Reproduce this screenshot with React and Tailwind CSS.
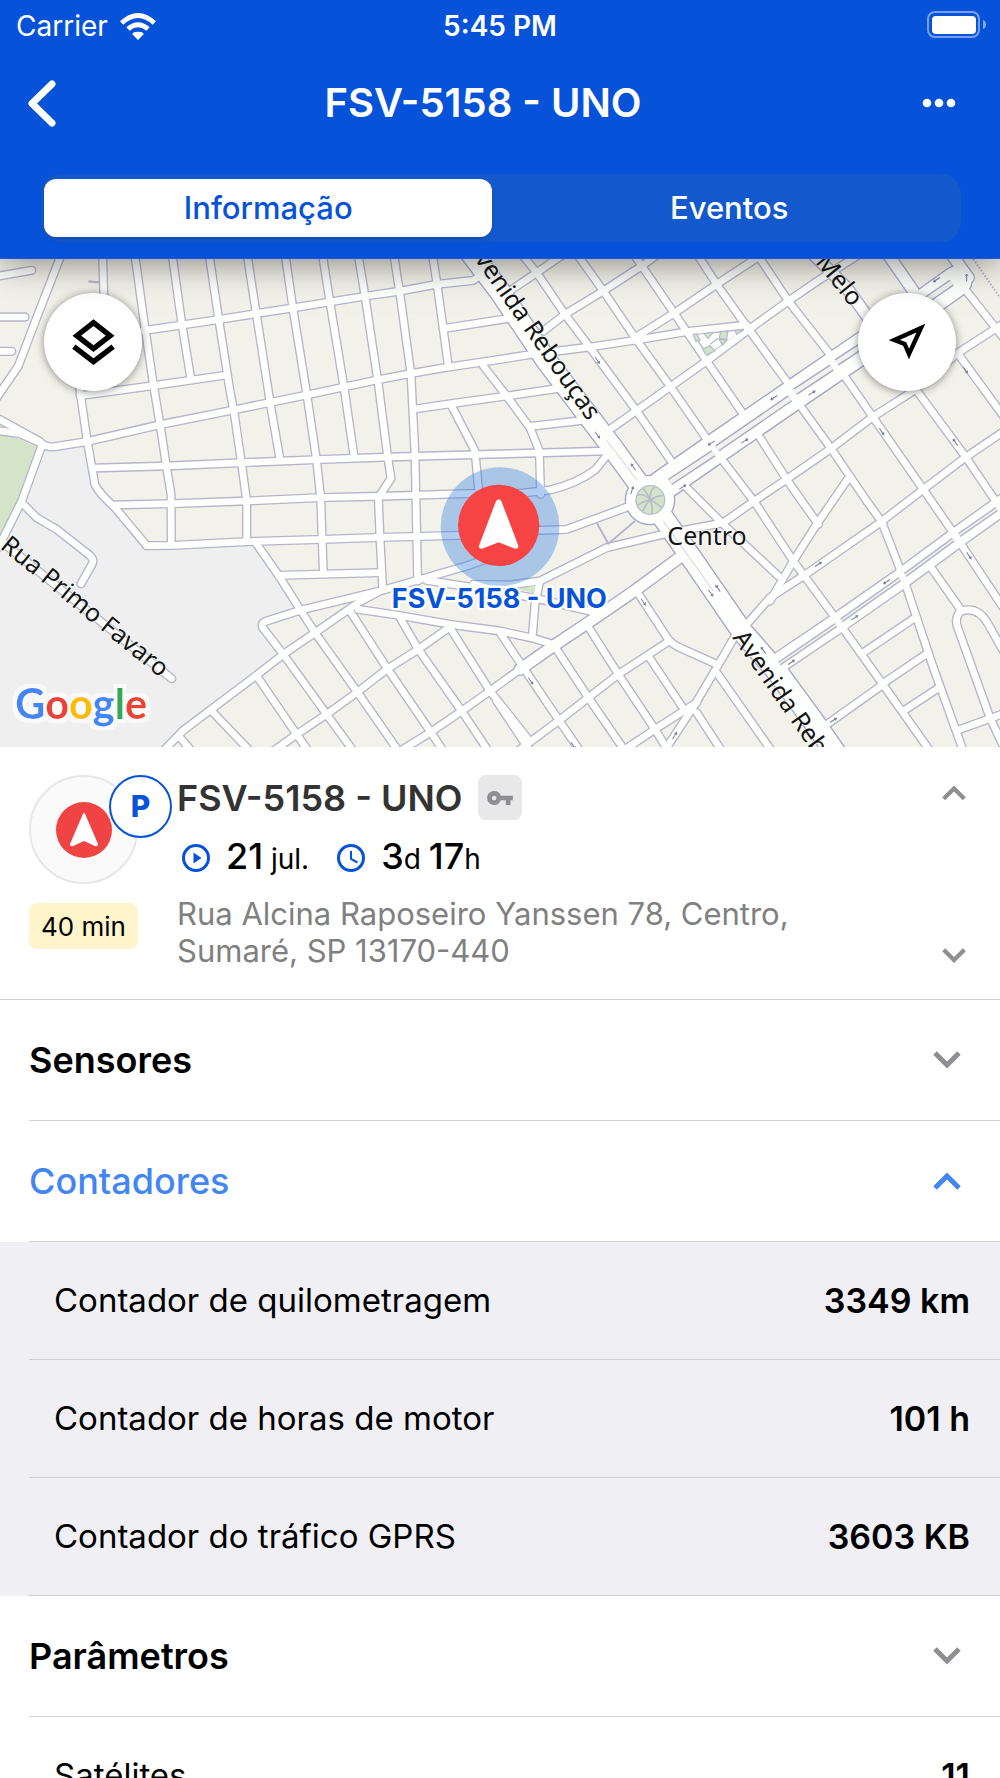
import React, { useState } from "react";
import { MdVpnKey } from "react-icons/md";

/* Town map, drawn on a 3000 x 1464 canvas that starts at y = 774. */
const streets = [
  "M430 989L640 958L870 922L1100 885L1190 872L1310 850L1420 838L1450 818",
  "M1330 983L1540 950",
  "M240 1184L460 1154L680 1122",
  "M-20 1287L60 1298L120 1325",
  "M-20 1245L120 1322Q135 1340 165 1337L260 1322L480 1271L700 1227L920 1182L1130 1137L1230 1118L1340 1099L1500 1075L1610 1058L1770 1038L1910 1017L2060 992L2240 972",
  "M1245 1224L1360 1207L1520 1185L1690 1160",
  "M285 1401L500 1395L730 1385L950 1376L1170 1368L1500 1359L1610 1356L1820 1350",
  "M1590 1276L1760 1257",
  "M340 1512L520 1508L740 1500L960 1490L1170 1485L1400 1478L1560 1477L1650 1467Q1730 1448 1785 1407L1825 1358",
  "M440 1634L520 1633L740 1622L970 1615L1140 1609L1380 1603L1500 1603",
  "M835 1723L1140 1715",
  "M237 1150L262 1322L285 1452Q300 1480 345 1520L440 1634",
  "M405 765L432 960L460 1150L480 1270L500 1400L513 1480L514 1632",
  "M517 765L545 965L572 1130",
  "M628 765L657 960L690 1170L703 1240L725 1390L740 1500L740 1622",
  "M742 765L770 945L812 1215L840 1375",
  "M856 765L880 930L922 1190L950 1380L962 1490L970 1715",
  "M968 765L990 905L1033 1165L1062 1365",
  "M1075 765L1095 885L1135 1150L1163 1368L1173 1432L1135 1490L1140 1610L1148 1760",
  "M1182 765L1200 880L1233 1120L1245 1360L1253 1740",
  "M1298 765L1312 855L1345 1095",
  "M1450 1095L1520 1185L1590 1280L1618 1350L1622 1480",
  "M1355 1215L1425 1350L1437 1480L1440 1600",
  "M182 765L110 950L55 1095L-20 1205",
  "M308 765L312 900",
  "M-20 828L95 808",
  "M-20 948L75 948",
  "M-20 1051L35 1051",
  "M125 1335L65 1500L-5 1640",
  "M65 1505L110 1550L170 1585L268 1662Q284 1676 276 1690L243 1748",
  "M-10 1610L515 2033",
  "M765 1622L835 1722L900 1825L945 1895L1070 2070L1195 2250",
  "M850 1960L980 2140L1060 2250",
  "M1050 1830L1160 2000L1290 2190L1330 2250",
  "M1200 1850L1255 1945L1385 2130L1465 2250",
  "M1350 1880L1470 2070L1585 2215",
  "M770 2025L890 2200L925 2250",
  "M635 2130L750 2250",
  "M540 2210L575 2250",
  "M480 2260L550 2188L760 2030L850 1960L945 1895L1075 1805L1140 1770",
  "M820 2250L890 2200L980 2140L1070 2075L1160 2005L1255 1945L1350 1878",
  "M1200 2250L1290 2195L1385 2130L1470 2070L1560 2005",
  "M850 1960L788 1880Q782 1865 800 1860L900 1828L1140 1770L1400 1695L1500 1660L1560 1590L1700 1585L1890 1515",
  "M1280 1738L1500 1772L1620 1795L1790 1835",
  "M1075 1825L1190 1842L1350 1870L1500 1890L1600 1912L1660 1930",
  "M1618 1745L1605 1810L1597 1905",
  "M1420 1750L1530 1752L1620 1740L1820 1640L1990 1600L2170 1565L2260 1502L2360 1435L2490 1345L2615 1250L2740 1170L2875 1055L3010 968",
  "M1570 765L1610 815L1695 940L1770 1040L1910 1230L2020 1390",
  "M1735 765L1810 870L1905 1010L2010 1155L2135 1335L2265 1505L2380 1680L2520 1870L2645 2045L2790 2250",
  "M1905 765L2025 940L2120 1080L2230 1240",
  "M2095 765L2150 850L2250 990L2370 1155",
  "M2275 765L2365 900L2490 1060",
  "M2875 1060L3010 1245",
  "M2755 1175L2895 1365L3000 1520",
  "M2860 820L3010 1010",
  "M1500 890L1610 815L1690 760",
  "M1630 990L1695 940L1810 870L1925 795L1980 755",
  "M1905 1010L2025 935L2150 850L2290 758",
  "M1830 1285L2010 1158L2120 1080L2240 990L2365 900L2460 835L2570 765",
  "M2240 1870L2310 1790L2410 1725L2640 1565L2770 1465L2895 1370L3010 1292",
  "M2310 1800L2380 1680L2450 1570L2505 1490L2550 1425",
  "M2055 1455L2170 1570L2335 1725",
  "M2280 1310L2360 1435L2405 1500L2455 1570",
  "M2405 1220L2495 1345L2600 1500L2645 1562L2710 1730L2750 1850L2800 2000L2890 2250",
  "M2530 1120L2620 1250L2770 1465L2870 1610L3010 1820",
  "M2790 1695L2885 1830Q2935 1815 2965 1870L3010 1950",
  "M2885 1828Q2860 1850 2875 1885L2970 2150L3010 2235",
  "M2590 1955L2745 1850",
  "M2645 2050L2785 1955",
  "M2710 2130L2820 2058",
  "M2460 2185L2650 2050",
  "M2880 2185L3010 2138",
  "M1910 1770L2000 1908Q2015 1930 2040 1940L2150 1990",
  "M2205 1905L2150 2000L2085 2110L1990 2255",
  "M2150 2015L2315 2250",
  "M2090 2135L2165 2250",
  "M1760 1870L1855 2020L1965 2185L2005 2250",
  "M1945 1965L2045 2115",
  "M1660 1930L1765 2090L1875 2250",
  "M1500 1895L1570 2000L1675 2155L1740 2250",
  "M1490 2100L1590 2250",
  "M1540 2260L1675 2160L1765 2090L1855 2020L2000 1925",
  "M1860 2255L1965 2185L2090 2105",
];
const avenues = [
  "M1560 2005L1660 1935L1760 1868L1900 1772L2045 1665",
  "M2420 740L2540 860L2640 1000",
  "M2650 740L2740 870",
  "M2840 740L2905 830L2860 850",
];
const boulevard = "M1985 1455L2140 1347L2380 1182L2500 1100L2640 1005L2870 840";
const boulevard2 = "M2330 1990L2510 1868L2705 1732L2870 1610L3010 1510";
const reboucas = "M1400 740L1500 872L1640 1080L1830 1330L1950 1495L2060 1650L2225 1890L2330 2010L2440 2160L2510 2260";
const medians = [
  "M2010 1443L2140 1357", "M2152 1342L2370 1192", "M2386 1172L2495 1100",
  "M2510 1084L2600 1025", "M2775 900L2855 845",
];
const medians2 = ["M2338 1988L2508 1872", "M2524 1858L2700 1734", "M2716 1722L2860 1616", "M2878 1602L2990 1524"];
const flow = [
  [1792, 1078, 55], [1792, 1302, 55], [1900, 1398, 235], [1896, 1468, 290], [2048, 1458, -33], [2234, 1320, -33],
  [2436, 1176, -33], [2322, 1190, 147], [2134, 1326, 147], [2896, 1107, 55], [2645, 1292, 55], [2866, 1324, 235],
  [2810, 836, 147], [2900, 830, 270], [2132, 1776, 55], [2154, 1762, 235], [1930, 1803, 55], [2455, 1690, -33],
  [2564, 1850, -33], [2660, 1742, 147], [2374, 1984, -33], [2290, 1948, 235], [2907, 1664, 55], [1592, 2040, 55],
  [2500, 2158, -33], [2024, 2204, -58], [1720, 2234, 55],
];

/* Road layers: paths, casing width, surface width, casing colour. */
const roadLayers = [
  [streets, 28, 20, "#b5b5cb"],
  [avenues, 40, 32, "#a9aacb"],
  [[boulevard], 96, 88, "#a3a5c9"],
  [[boulevard2], 66, 58, "#b5b5cb"],
  [[reboucas], 68, 60, "#a3a5c9"],
];

function TownMap() {
  return (
    <svg viewBox="0 774 3000 1464" className="block h-auto w-full" role="img" aria-label="Mapa">
      <defs>
        <filter id="halo" x="-10%" y="-20%" width="120%" height="140%">
          <feMorphology in="SourceAlpha" operator="dilate" radius="12" result="grown" />
          <feFlood floodColor="#f9f9f9" />
          <feComposite in2="grown" operator="in" result="edge" />
          <feMerge>
            <feMergeNode in="edge" />
            <feMergeNode in="SourceGraphic" />
          </feMerge>
        </filter>
      </defs>
      <rect y="774" width="3000" height="1464" fill="#f3f2ea" />
      <path d="M-10 1310L125 1340L262 1322L285 1452L345 1520L440 1634L765 1622L900 1825L785 1870L850 1960L550 2188L480 2260H-10Z" fill="#eeefee" />
      <path d="M-10 1305L25 1300L115 1340L60 1490L-10 1625Z" fill="#d3e4c9" />
      <path d="M265 841L297 844" stroke="#b5b5cb" strokeWidth="7" />
      {roadLayers.map(([paths, casing, , edge]) => (
        <g key={paths[0]} stroke={edge} strokeWidth={casing} fill="none" strokeLinecap="round" strokeLinejoin="round">
          {paths.map((d) => <path key={d} d={d} />)}
        </g>
      ))}
      <circle cx="1950" cy="1497" r="76" fill="#a3a5c9" />
      {roadLayers.map(([paths, , surface]) => (
        <g key={paths[0]} stroke="#fdfffc" strokeWidth={surface} fill="none" strokeLinecap="round" strokeLinejoin="round">
          {paths.map((d) => <path key={d} d={d} />)}
        </g>
      ))}
      <circle cx="1950" cy="1497" r="72" fill="#fdfffc" />
      <g fill="none">
        {medians.map((d) => <path key={d} d={d} stroke="#a3a5c9" strokeWidth="22" />)}
        {medians.map((d) => <path key={d} d={d} stroke="#f3f2ea" strokeWidth="14" />)}
        {medians2.map((d) => <path key={d} d={d} stroke="#b5b5cb" strokeWidth="14" />)}
        {medians2.map((d) => <path key={d} d={d} stroke="#f3f2ea" strokeWidth="5" />)}
        <path d="M1820 1318L1910 1436M1990 1560L2140 1770" stroke="#b5b5cb" strokeWidth="2" />
        <path d="M2920 774L3000 890" stroke="#b5b5cb" strokeWidth="6" strokeDasharray="5 5" />
        <path d="M1790 1565L1825 1628L1905 1560" stroke="#b5b5cb" strokeWidth="6" />
      </g>
      <circle cx="1951" cy="1497" r="43" fill="#d3e4c9" stroke="#b9bccb" strokeWidth="4" />
      <g stroke="#b9bccb" strokeWidth="5" fill="none">
        <path d="M1951 1497Q1948 1470 1965 1457M1951 1497Q1975 1482 1990 1484M1951 1497Q1975 1510 1985 1520M1951 1497Q1960 1520 1955 1538M1951 1497Q1932 1515 1928 1532M1951 1497Q1925 1502 1912 1514M1951 1497Q1935 1478 1912 1482M1951 1497Q1938 1470 1928 1462" />
      </g>
      <path d="M2085 1002L2225 990L2125 1058Z" fill="#fdfffc" />
      <g fill="#d3e4c9" stroke="#b9bccb" strokeWidth="4">
        <path d="M2080 1000L2090 998L2100 1018L2088 1022Z" />
        <path d="M2112 998L2140 994L2124 1012Z" />
        <path d="M2162 992L2183 990L2180 1015L2158 1012Z" />
        <path d="M2158 1016L2180 1016L2168 1032Z" />
        <path d="M2205 988L2232 986L2210 1000Z" />
        <path d="M2108 1044L2130 1034L2144 1050L2118 1062Z" />
        <path d="M2130 1030L2155 1012" />
      </g>
      <path d="M1555 1765L1606 1752L1602 1775Z" fill="#d3e4c9" />
      <g stroke="#7c7fa6" strokeWidth="3" fill="none">
        {flow.map(([x, y, a]) => (
          <g key={x + "-" + y} transform={`translate(${x} ${y}) rotate(${a})`}>
            <path d="M-12 0H10M5 -4L11 0L5 4" />
          </g>
        ))}
      </g>
      <g fontFamily="'Noto Sans', sans-serif" fontSize="75" fill="#141414" stroke="#fdfffc" strokeWidth="4" paintOrder="stroke">
        <text x="2002" y="1632">Centro</text>
        <text transform="translate(1395 735) rotate(55)">Avenida Rebouças</text>
        <text transform="translate(2444 784) rotate(51)">Melo</text>
        <text transform="translate(2196 1910) rotate(55)">Avenida Rebouças</text>
        <text transform="translate(-2 1640) rotate(39)">Rua Primo Favaro</text>
      </g>
      <circle cx="1500" cy="1577" r="178" fill="#2f7ae0" fillOpacity="0.37" />
      <circle cx="1496" cy="1573" r="122" fill="#f64444" />
      <path d="M1496 1495Q1502 1495 1505 1503L1555 1634Q1557 1644 1546 1643L1496 1624L1446 1643Q1435 1644 1437 1634L1487 1503Q1490 1495 1496 1495Z" fill="#fff" />
      <text x="1498" y="1821" textAnchor="middle" fontFamily="Inter, sans-serif" fontWeight="700" fontSize="81" fill="#0653d9" stroke="#fff" strokeWidth="14" strokeLinejoin="round" paintOrder="stroke">
        FSV-5158 - UNO
      </text>
      <text x="46" y="2155" fontFamily="Lato, sans-serif" fontWeight="700" fontSize="124" filter="url(#halo)">
        <tspan fill="#4285f4">G</tspan><tspan fill="#ea4335">o</tspan><tspan fill="#fbbc05">o</tspan><tspan fill="#4285f4">g</tspan><tspan fill="#34a853">l</tspan><tspan fill="#ea4335">e</tspan>
      </text>
    </svg>
  );
}

function Chevron({ up, className }) {
  return (
    <svg viewBox="0 0 28 18" className={className} fill="none" stroke="currentColor" strokeWidth="5" aria-hidden="true">
      <path d={up ? "M2 16L14 4L26 16" : "M2 2L14 14L26 2"} />
    </svg>
  );
}

function StatusBar() {
  return (
    <div className="grid grid-cols-3 items-center px-4 pt-2 text-[28px] leading-9">
      <div className="flex items-center gap-3">
        <span>Carrier</span>
        <svg viewBox="0 0 108 81" className="h-[27px] w-9" fill="currentColor" aria-hidden="true">
          <path d="M54 81L37 64Q36 57 54 56Q72 57 71 64Z" />
          <path d="M19 43Q54 13 89 43L79 53Q54 33 29 53Z" />
          <path d="M0 25Q54 -25 108 25L98 35Q54 -5 10 35Z" />
        </svg>
      </div>
      <span className="text-center font-semibold">5:45 PM</span>
      <svg viewBox="0 0 59 27" className="-mr-0.5 mb-1 h-[27px] w-[59px] justify-self-end" aria-hidden="true">
        <rect x="1" y="1" width="51" height="25" rx="7" fill="none" stroke="#fff" strokeOpacity="0.45" strokeWidth="2" />
        <rect x="5" y="5" width="44" height="18" rx="4" fill="#fff" />
        <path d="M56 9Q59 10 59 13.500T56 18Z" fill="#fff" fillOpacity="0.5" />
      </svg>
    </div>
  );
}

function SectionHeader({ title, open }) {
  return (
    <h3 className="ml-[29px] border-b border-[#d3d3d6]">
      <button
        type="button"
        aria-expanded={open}
        className={open ? "flex h-[120px] w-full items-center justify-between pr-[39px] text-4xl font-medium text-[#4285f4]" : "flex h-[120px] w-full items-center justify-between pr-[39px] text-4xl font-semibold text-black"}
      >
        {title}
        <Chevron up={open} className={open ? "w-7" : "w-7 text-[#8e8e93]"} />
      </button>
    </h3>
  );
}

function Row({ label, value }) {
  return (
    <div className="ml-[29px] flex h-[118px] items-center justify-between border-b border-[#d0d0d4] pr-[30px] pl-[25px]">
      <dt className="text-[33px]">{label}</dt>
      <dd className="text-[34px] font-semibold">{value}</dd>
    </div>
  );
}

export default function App() {
  const [tab, setTab] = useState("info");
  const on = "h-[58px] rounded-xl bg-white text-[31px] font-medium text-[#0653d9] shadow-md";
  const off = "h-[58px] rounded-xl text-[31px] font-medium text-white";
  return (
    <div className="flex h-screen flex-col overflow-hidden bg-white font-[Inter,sans-serif] text-black">
      <header className="relative z-10 bg-[#0653d9] pb-[17px] text-white shadow-[0_2px_36px_rgba(0,0,0,0.5)]">
        <StatusBar />
        <div className="flex h-[118px] items-center justify-between pr-11 pl-7">
          <button type="button" aria-label="Voltar">
            <svg viewBox="0 0 28 47" className="h-[47px] w-7" fill="none" stroke="currentColor" strokeWidth="7" strokeLinecap="round" strokeLinejoin="round">
              <path d="M24 4L4 23.500L24 43" />
            </svg>
          </button>
          <h1 className="pr-3 text-[40px] font-semibold">FSV-5158 - UNO</h1>
          <button type="button" aria-label="Mais opções">
            <svg viewBox="0 0 34 10" className="h-[10px] w-[34px]" fill="currentColor">
              <circle cx="5" cy="5" r="4.300" /><circle cx="17" cy="5" r="4.300" /><circle cx="29" cy="5" r="4.300" />
            </svg>
          </button>
        </div>
        <div role="tablist" className="mr-[39px] ml-[41px] mt-3 grid grid-cols-[49fr_50fr] gap-2 rounded-[20px] bg-[#1359cd] px-[3px] py-[5px]">
          <button type="button" role="tab" aria-selected={tab === "info"} onClick={() => setTab("info")} className={tab === "info" ? on : off}>Informação</button>
          <button type="button" role="tab" aria-selected={tab === "events"} onClick={() => setTab("events")} className={tab === "events" ? on : off}>Eventos</button>
        </div>
      </header>

      <div className="relative shrink-0">
        <TownMap />
        <button type="button" aria-label="Camadas" className="absolute top-[34px] left-11 flex size-[98px] items-center justify-center rounded-full bg-white shadow-[0_1px_8px_rgba(0,0,0,0.45)]">
          <svg viewBox="0 0 128 138" className="h-[46px] w-[43px]" fill="none" stroke="currentColor" strokeWidth="16">
            <path d="M64 11L114 50L64 89L14 50Z" />
            <path d="M5 83L64 128L123 83" />
          </svg>
        </button>
        <button type="button" aria-label="Minha localização" className="absolute top-[34px] right-11 flex size-[98px] items-center justify-center rounded-full bg-white shadow-[0_1px_8px_rgba(0,0,0,0.45)]">
          <svg viewBox="0 0 108 108" className="size-9" fill="none" stroke="currentColor" strokeWidth="13">
            <path d="M96 12L16 48L47 60L60 90Z" />
          </svg>
        </button>
      </div>

      <section className="flex border-b border-[#cfcfd2] pt-7 pr-[34px] pb-[30px] pl-[29px]">
        <div className="w-[148px] shrink-0">
          <div className="relative flex size-[109px] items-center justify-center rounded-full border-2 border-[#e6e6e6] bg-[#fafafa]">
            <svg viewBox="0 0 56 56" className="size-14" aria-hidden="true">
              <circle cx="28" cy="28" r="28" fill="#f04444" />
              <path d="M28 11Q29 11 29.500 13L42 42Q42 45 39 44L28 39L17 44Q14 45 14 42L26.500 13Q27 11 28 11Z" fill="#fff" />
            </svg>
            <span className="absolute -top-0.5 -right-9 flex size-[63px] items-center justify-center rounded-full border-2 border-[#0653d9] bg-white text-[30px] font-extrabold text-[#0653d9]">P</span>
          </div>
          <span className="mt-[19px] flex h-[46px] w-[109px] items-center justify-center rounded-lg bg-[#fff5cc] text-[26px]">40 min</span>
        </div>
        <div className="flex-1">
          <div className="flex h-[45px] items-center gap-4">
            <h2 className="text-4xl font-semibold text-[#333]">FSV-5158 - UNO</h2>
            <span className="flex h-[45px] w-11 items-center justify-center rounded-lg bg-[#e8e8e8]">
              <MdVpnKey className="size-7 text-[#8e8e93]" aria-label="Chave" />
            </span>
          </div>
          <div className="mt-4 flex h-11 items-center">
            <svg viewBox="0 0 28 28" className="ml-[5px] size-7" fill="none" stroke="#0653d9" strokeWidth="3" aria-hidden="true">
              <circle cx="14" cy="14" r="12.500" />
              <path d="M11.500 8.500V19.500L19.500 14Z" fill="#0653d9" stroke="none" />
            </svg>
            <span className="ml-4 text-[28px]"><span className="text-4xl font-medium">21</span> jul.</span>
            <svg viewBox="0 0 28 28" className="ml-7 size-7" fill="none" stroke="#0653d9" strokeWidth="3" aria-hidden="true">
              <circle cx="14" cy="14" r="12.500" />
              <path d="M14 7V15L20.500 18.500" strokeWidth="2" />
            </svg>
            <span className="ml-4 text-[28px]"><span className="text-4xl font-medium">3</span>d <span className="text-4xl font-medium">17</span>h</span>
          </div>
          <p className="mt-[15px] max-w-[640px] text-[31px] leading-[37px] text-[#808080]">Rua Alcina Raposeiro Yanssen 78, Centro, Sumaré, SP 13170-440</p>
        </div>
        <div className="flex flex-col justify-between pt-2.5 pb-1.5 text-[#8e8e93]">
          <button type="button" aria-label="Anterior"><Chevron up className="w-6" /></button>
          <button type="button" aria-label="Próximo"><Chevron className="w-6" /></button>
        </div>
      </section>

      <div className="min-h-0 flex-1 overflow-hidden">
        <SectionHeader title="Sensores" open={false} />
        <SectionHeader title="Contadores" open />
        <dl className="bg-[#efeff4]">
          <Row label="Contador de quilometragem" value="3349 km" />
          <Row label="Contador de horas de motor" value="101 h" />
          <Row label="Contador do tráfico GPRS" value="3603 KB" />
        </dl>
        <SectionHeader title="Parâmetros" open={false} />
        <dl>
          <Row label="Satélites" value="11" />
        </dl>
      </div>
    </div>
  );
}
